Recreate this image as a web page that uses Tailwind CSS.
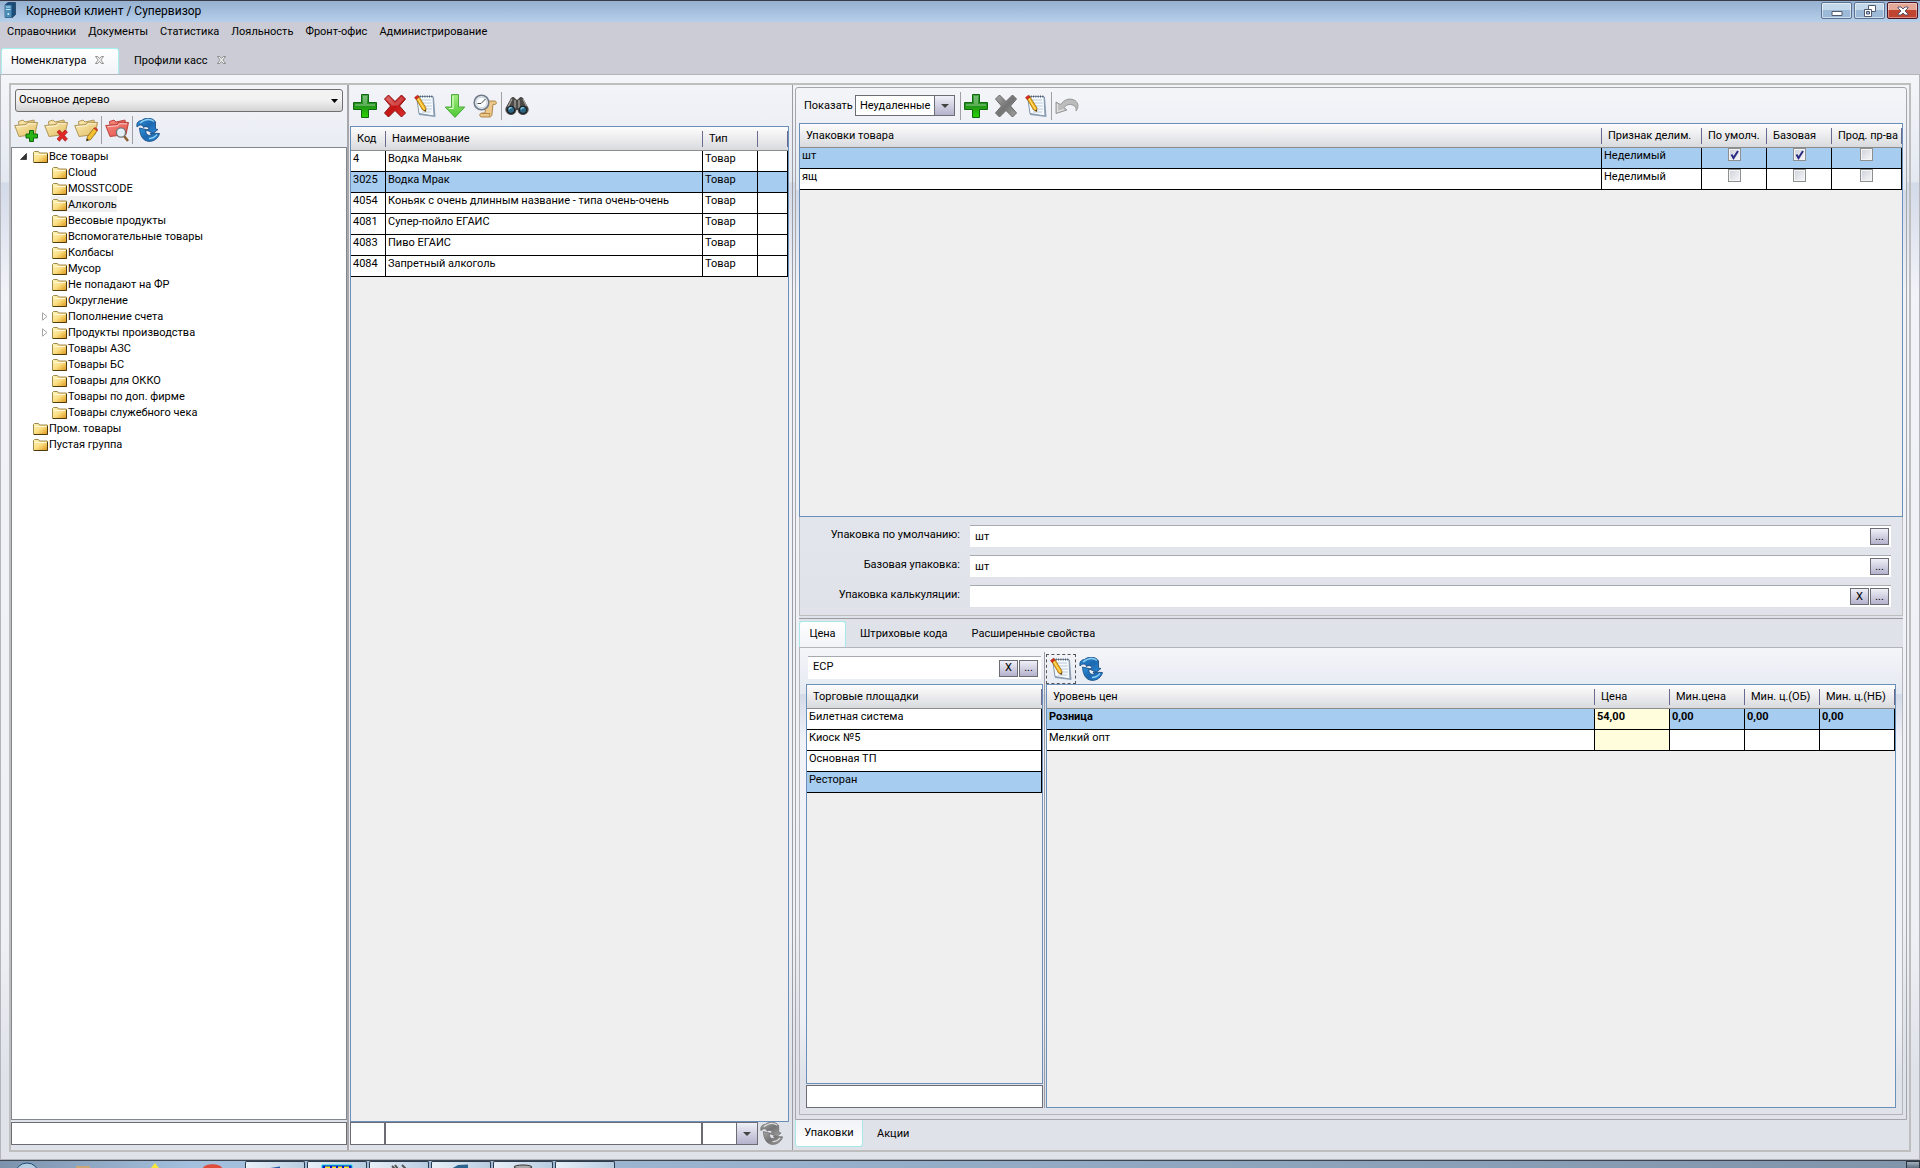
<!DOCTYPE html>
<html lang="ru">
<head>
<meta charset="utf-8">
<title>Корневой клиент / Супервизор</title>
<script src="https://cdn.jsdelivr.net/npm/@tailwindcss/browser@4"></script>
</head>
<body class="flex min-h-screen flex-col bg-[#cbccd5] font-['Roboto',sans-serif] text-[11px] leading-4 text-black">
<svg class="absolute size-0" aria-hidden="true">
  <defs>
    <linearGradient id="gGreen" x1="0" y1="0" x2="0" y2="1"><stop offset="0" stop-color="#4aa84a"/><stop offset=".45" stop-color="#1f8f1a"/><stop offset="1" stop-color="#2bd400"/></linearGradient>
    <linearGradient id="gRed" x1="0" y1="0" x2="1" y2="1"><stop offset="0" stop-color="#d84a4a"/><stop offset=".5" stop-color="#c41414"/><stop offset="1" stop-color="#e03030"/></linearGradient>
    <linearGradient id="gDown" x1="0" y1="0" x2="0" y2="1"><stop offset="0" stop-color="#a4ec80"/><stop offset="1" stop-color="#4cc832"/></linearGradient>
    <linearGradient id="gBlue" x1="0" y1="0" x2="1" y2="1"><stop offset="0" stop-color="#2f95dc"/><stop offset=".5" stop-color="#1c68b0"/><stop offset="1" stop-color="#2c8ad6"/></linearGradient>
    <linearGradient id="gGray" x1="0" y1="0" x2="1" y2="1"><stop offset="0" stop-color="#a8a8a8"/><stop offset=".5" stop-color="#747474"/><stop offset="1" stop-color="#a4a4a4"/></linearGradient>
    <linearGradient id="gFold" x1="0" y1="0" x2="1" y2="1"><stop offset="0" stop-color="#fdf3b8"/><stop offset=".5" stop-color="#fbdf84"/><stop offset="1" stop-color="#dc9412"/></linearGradient>
    <linearGradient id="gOpen" x1="0" y1="0" x2="1" y2="1"><stop offset="0" stop-color="#fbecb4"/><stop offset="1" stop-color="#e2bc62"/></linearGradient>
    <linearGradient id="gOpenR" x1="0" y1="0" x2="1" y2="1"><stop offset="0" stop-color="#f88a80"/><stop offset="1" stop-color="#e05048"/></linearGradient>
  </defs>
  <symbol id="plus" viewBox="0 0 24 24"><path d="M8.500.5h7v8h8v7h-8v8h-7v-8h-8v-7h8z" fill="url(#gGreen)" stroke="#126612"/><path d="M10 2h4v8h8v2H2v-2h8z" fill="#fff" opacity=".28"/></symbol>
  <symbol id="cross" viewBox="0 0 24 24"><path d="M5.500 1 12 7.500 18.500 1 22.500 5 16.500 12l6 7-4 4L12 16.500 5.500 23l-4-4 6-7-6-7z" fill="url(#gRed)" stroke="#8c1010"/><path d="M5.500 2.500 12 9l6.500-6.500L21 5l-6 6.500H9L3 5z" fill="#fff" opacity=".22"/></symbol>
  <symbol id="crossG" viewBox="0 0 24 24"><path d="M5.500 1 12 7.500 18.500 1 22.500 5 16.500 12l6 7-4 4L12 16.500 5.500 23l-4-4 6-7-6-7z" fill="url(#gGray)" stroke="#666"/></symbol>
  <symbol id="edit" viewBox="0 0 24 24"><path d="M4 3h17l1.500 20L6 21z" fill="#8fa3b8"/><path d="M3.500 2.500h16.500L21 22 6 19.500z" fill="#f6fafd" stroke="#7c90a6" stroke-width=".9"/><path d="M7 6h11M7.500 9h11M8 12h11M8 15h11M9 18h9" stroke="#b4c6da" stroke-width=".9"/><path d="M4.500 2.500h15" stroke="#44566c" stroke-width="2" stroke-dasharray="1 1.300"/><path d="m2.500 4 3-2 7.500 12-.300 3.500-3-1.500z" fill="#f7b51c" stroke="#9c6a10" stroke-width=".8"/><path d="m4.500 4 7 11.500" stroke="#ffe88a"/><path d="m1.500 3.500 3-2.300 1.500 2-3 2.300z" fill="#e0281c" stroke="#90201c" stroke-width=".5"/><path d="m11 16.500 1.700 1-.1-2z" fill="#222"/></symbol>
  <symbol id="down" viewBox="0 0 24 24"><path d="M8.500.6h7V13h6.300L12 23.400 2.200 13h6.300z" fill="url(#gDown)" stroke="#4aa83a"/><path d="M10 2v12.500H6" fill="none" stroke="#d8ffc8" stroke-width="1.200"/></symbol>
  <symbol id="history" viewBox="0 0 24 24"><path d="M13 7h8.500c2.500 0 2.500 3.500 0 3.500l-1.500-.3-1 9.800c0 2-1 3-3 3H9c-3 0-3-4 0-4h3z" fill="#ecc98a" stroke="#a87c3c" stroke-width=".9"/><path d="M9 19.500h8c-1 1-1 2 0 3" fill="none" stroke="#a87c3c" stroke-width=".8"/><circle cx="8.500" cy="8.500" r="7.300" fill="#e8eef4" stroke="#6f7a86" stroke-width="1.600"/><circle cx="8.500" cy="8.500" r="5.200" fill="#fbfdff" stroke="#b4c0cc" stroke-width=".6"/><path d="M8 9.500 12.500 5M8 9.500H4.500" stroke="#444" stroke-width="1" fill="none"/></symbol>
  <symbol id="binoc" viewBox="0 0 24 24"><path d="M6 5c0-2 4-2 4 0l1 1h2l1-1c0-2 4-2 4 0l5 9c1 4-2 6.500-5 6.500s-5-2-5-5h-2c0 3-2 5-5 5S0 18 1 14z" fill="#4c4a48" stroke="#2a2826" stroke-width=".7"/><path d="m7 5-4 8M18 5l3.500 7M10 6v8M14 6v8" stroke="#a8a49c" stroke-width="1.300"/><circle cx="6" cy="15.800" r="3.700" fill="#2c6684" stroke="#161616"/><circle cx="18" cy="15.800" r="3.700" fill="#2c6684" stroke="#161616"/><path d="M4 15.500a2 2 0 0 1 3-1.500M16 15.500a2 2 0 0 1 3-1.500" stroke="#8cd0ec" stroke-width="1.300" fill="none"/></symbol>
  <symbol id="undo" viewBox="0 0 24 24"><path d="M1 8v11.500l11-3.500-3-2.500c3-3.500 7-4 10.500-1.500 1.500 1.500 2 3 1.500 5 3-4 2.500-8-1-10.500C15 3.500 9 5.500 5.500 10.500z" fill="#bcbcbc" stroke="#929292" stroke-width=".9"/><path d="M2.500 10v7.500L9 15.500" fill="none" stroke="#e4e4e4" stroke-width="1.200"/></symbol>
  <symbol id="arrows" viewBox="0 0 24 24"><path d="M1 9C0 4.500 3 2.500 5.500 2.500 9-.8 17-.8 19.500 4v7l2.500.5L17.500 15 10 12l3-1c-.5-2.500-4-3-5.500-1.500L6.500 7.500C4 6.500 2.500 7.500 1 9z"/><path d="M3.500 10 10 11.500v3c.5 2.500 3 3.500 5.500 2.500l-1.500-2 9.500.5C22.500 20 18 24 12 23.300c-5-.8-8-5.300-8.500-13.300z"/></symbol>
  <symbol id="refresh" viewBox="0 0 24 24"><use href="#arrows" width="24" height="24" fill="url(#gBlue)" stroke="#12457c" stroke-width=".8"/><path d="M4 5c5-4 10-4.500 14-1.500M13 20.500c3 0 6-1.500 8-4" stroke="#8cd0f4" stroke-width="1.300" fill="none"/></symbol>
  <symbol id="refreshG" viewBox="0 0 24 24"><use href="#arrows" width="24" height="24" fill="url(#gGray)" stroke="#6c6c6c" stroke-width=".8"/><path d="M4 5c5-4 10-4.500 14-1.500M13 20.500c3 0 6-1.500 8-4" stroke="#ddd" stroke-width="1.300" fill="none"/></symbol>
  <symbol id="folder" viewBox="0 0 15 12"><path d="M.5 11.500V1.500l1-1h4l1 1.500h8v9.500z" fill="url(#gFold)" stroke="#a08a50"/><path d="M14.500 3v8.500H1" fill="none" stroke="#4c3a10"/><path d="M1.500 3.500h12" stroke="#fff8d8"/></symbol>
  <symbol id="fopen" viewBox="0 0 24 22"><path d="M6 16 4.500 3.500 9 2l2 2 9-2 1.500 12z" stroke-width=".9"/><path d="M.7 7.500 12 6.500l1.500-2.300 10 .3L21 16.500 5 18.500z" stroke-width=".9"/><path d="M2.500 8.700 13 7.700l1.500-2 7.500.2" fill="none" stroke="#fff" stroke-opacity=".6"/></symbol>
  <symbol id="fadd" viewBox="0 0 24 24"><use href="#fopen" width="24" height="22" fill="url(#gOpen)" stroke="#a88c4c"/><path d="M15.500 12.500h4v3.500h4v4h-4v3.500h-4V20H12v-4h3.500z" fill="#28b414" stroke="#126612"/></symbol>
  <symbol id="fdel" viewBox="0 0 24 24"><use href="#fopen" width="24" height="22" fill="url(#gOpen)" stroke="#a88c4c"/><path d="m13 14 2.500-2 2.700 3 2.800-3 2.500 2-3 3.500 3 3.500-2.500 2.300-2.800-3.300-2.700 3.300L13 21l3-3.500z" fill="#e02828" stroke="#a01414" stroke-width=".6"/></symbol>
  <symbol id="fedit" viewBox="0 0 24 24"><use href="#fopen" width="24" height="22" fill="url(#gOpen)" stroke="#a88c4c"/><path d="m12.500 22.800 1-4.300L20 10l3.500 2.500-6.700 9z" fill="#f2c030" stroke="#8c6818" stroke-width=".8"/><path d="m19.500 10.500 1.500-1.500 3 2.200-1.200 2z" fill="#d03c2c"/><path d="m12.300 23 .6-2.500 1.900 1.500z" fill="#222"/></symbol>
  <symbol id="ffind" viewBox="0 0 24 24"><use href="#fopen" width="24" height="22" fill="url(#gOpenR)" stroke="#b43830"/><path d="m19 18 4 5" stroke="#8c6030" stroke-width="2.500"/><circle cx="16" cy="14.500" r="4.600" fill="#e4f0f8" stroke="#777" stroke-width="1.400"/></symbol>
</svg>

<header>
  <div class="flex h-[22px] items-start border-t border-[#3a3a44] bg-linear-to-b from-[#95b0d0] to-[#b6cfea] pl-1">
    <svg class="mt-px h-4 w-3" viewBox="0 0 12 16" aria-hidden="true"><path d="M1 3 4 .5h7.500v12L8.500 15.500H1z" fill="#1c4c78" stroke="#0e2c4c" stroke-width=".6"/><path d="M1 3h6.500v12.500H1z" fill="#4a8cb8"/><path d="M2 5h4.500M2 7.500h4.500" stroke="#c4e4f4"/><circle cx="4.300" cy="12" r="1" fill="#d8f0fc"/></svg>
    <h1 class="ml-[10px] text-xs leading-5 font-normal">Корневой клиент / Супервизор</h1>
    <div class="ml-auto flex gap-[2px] pt-px pr-[2px]">
      <button aria-label="Свернуть" class="flex h-[17px] w-[31px] items-center justify-center rounded-[2px] border border-[#5c7090] bg-linear-to-b from-[#c4d8ec] from-45% to-[#9cbad8] to-50% shadow-[inset_0_0_0_1px_#ffffff80]"><svg class="h-3 w-3" viewBox="0 0 12 12"><path d="M1 6.500h10v4H1z" fill="#fff" stroke="#50586c"/></svg></button>
      <button aria-label="Развернуть" class="flex h-[17px] w-[31px] items-center justify-center rounded-[2px] border border-[#5c7090] bg-linear-to-b from-[#c4d8ec] from-45% to-[#9cbad8] to-50% shadow-[inset_0_0_0_1px_#ffffff80]"><svg class="h-3 w-3" viewBox="0 0 12 12"><path d="M4.500.5h7v6h-7z" fill="#fff" stroke="#50586c"/><path d="M.5 4.500h7v7h-7z" fill="#fff" stroke="#50586c"/><path d="M2.500 6.500h3v2.500h-3z" fill="#9cbad8" stroke="#50586c"/></svg></button>
      <button aria-label="Закрыть" class="flex h-[17px] w-[31px] items-center justify-center rounded-[2px] border border-[#4c1420] bg-linear-to-b from-[#e4a898] from-45% to-[#c04430] to-50% shadow-[inset_0_0_0_1px_#ffffff60]"><svg class="h-[10px] w-3" viewBox="0 0 12 10"><path d="M1 1h3l2 2 2-2h3v1L8 5l3 3v1H8L6 7 4 9H1V8l3-3-3-3z" fill="#fff" stroke="#504860" stroke-width=".9"/></svg></button>
    </div>
  </div>
  <nav class="flex h-[26px] items-start gap-3 pt-[2px] pl-[7px]">
    <a href="#">Справочники</a><a href="#">Документы</a><a href="#">Статистика</a><a href="#">Лояльность</a><a href="#">Фронт-офис</a><a href="#">Администрирование</a>
  </nav>
  <div class="flex h-[26px] pl-px">
    <button class="flex w-[118px] items-center gap-[9px] rounded-t-[3px] border border-b-0 border-[#a8f0f0] bg-linear-to-b from-white to-[#f2f3f8] pb-px pl-[9px] text-left">Номенклатура
      <svg class="mb-[2px] h-2 w-[9px]" viewBox="0 0 9 8"><path d="M.5.5h2.200l1.800 2 1.800-2h2.200L5.800 4l2.700 3.500H6.300l-1.800-2-1.800 2H.5L3.200 4z" fill="#f4f4f4" stroke="#777" stroke-width=".8"/></svg></button>
    <button class="flex items-center gap-[9px] pl-[15px] text-left">Профили касс
      <svg class="mb-[2px] h-2 w-[9px]" viewBox="0 0 9 8"><path d="M.5.5h2.200l1.800 2 1.800-2h2.200L5.800 4l2.700 3.500H6.300l-1.800-2-1.800 2H.5L3.200 4z" fill="#f4f4f4" stroke="#777" stroke-width=".8"/></svg></button>
  </div>
</header>

<main class="flex flex-1 flex-col border border-[#b4b5ba] bg-[linear-gradient(#f4f5f9,#e4e9f1_9.8%,#d3dae8_10%,#f2f3f9_20%,#eef0f5_80%,#e0e2ea_92%)] px-2 pt-2 pb-[7px]">
  <div class="flex flex-1 border-2 border-[#bebebe]">
    <!-- Дерево групп -->
    <section class="flex w-[336px] shrink-0 flex-col">
      <div class="relative px-1 pt-1"><select aria-label="Дерево" class="h-[23px] w-full appearance-none rounded-[3px] border border-[#707070] bg-linear-to-b from-[#f2f2f2] from-45% to-[#d4d4d4] pb-px pl-[3px]"><option>Основное дерево</option></select>
        <svg class="pointer-events-none absolute top-[14px] right-[9px] h-1 w-[7px]" viewBox="0 0 7 4"><path d="M0 0h7L3.500 4z"/></svg></div>
      <div class="flex h-[35px] items-center pl-[3px]">
        <button aria-label="Добавить группу"><svg class="size-6"><use href="#fadd"/></svg></button>
        <button aria-label="Удалить группу" class="ml-[6px]"><svg class="size-6"><use href="#fdel"/></svg></button>
        <button aria-label="Изменить группу" class="ml-[6px]"><svg class="size-6"><use href="#fedit"/></svg></button>
        <i class="ml-[3px] h-7 w-px bg-[#a0a0a4]"></i>
        <button aria-label="Найти группу" class="ml-[3px]"><svg class="size-6"><use href="#ffind"/></svg></button>
        <i class="ml-[3px] h-7 w-px bg-[#a0a0a4]"></i>
        <button aria-label="Обновить" class="ml-[3px]"><svg class="size-6"><use href="#refresh"/></svg></button>
      </div>
      <ul id="tree" class="flex-1 border border-[#828790] bg-white pl-[7px]"></ul>
      <input aria-label="Поиск группы" class="mt-[2px] mb-[5px] h-[23px] border border-[#6c6c74] bg-white px-1">
    </section>
    <div class="w-[3px] shrink-0 border-l-2 border-[#a8a8ac] bg-[#ececf0]"></div>

    <!-- Товары -->
    <section class="flex w-[442px] shrink-0 flex-col">
      <div class="flex h-[41px] items-center pl-[3px]">
        <button aria-label="Добавить"><svg class="size-6"><use href="#plus"/></svg></button>
        <button aria-label="Удалить" class="ml-[6px]"><svg class="size-6"><use href="#cross"/></svg></button>
        <button aria-label="Изменить" class="ml-[6px]"><svg class="size-6"><use href="#edit"/></svg></button>
        <button aria-label="Переместить" class="ml-[6px]"><svg class="size-6"><use href="#down"/></svg></button>
        <button aria-label="История" class="ml-[6px]"><svg class="size-6"><use href="#history"/></svg></button>
        <i class="ml-[4px] h-7 w-px bg-[#a0a0a4]"></i>
        <button aria-label="Поиск" class="ml-[3px]"><svg class="size-6"><use href="#binoc"/></svg></button>
      </div>
      <div class="mr-[3px] flex-1 border border-[#6a8fb8] bg-[#efefef]">
        <table id="goods" class="w-full table-fixed border-separate border-spacing-0 text-left"></table>
      </div>
      <div class="mb-[5px] flex h-[23px]">
        <input aria-label="Фильтр: код" class="w-[35px] border border-[#6c6c74] bg-white">
        <input aria-label="Фильтр: наименование" class="w-[317px] border border-[#6c6c74] bg-white">
        <select aria-label="Фильтр: тип" class="w-[35px] appearance-none border border-[#6c6c74] bg-white"><option></option></select>
        <button aria-label="Открыть список" class="flex w-[21px] items-center justify-center border border-l-0 border-[#6c6c74] bg-linear-to-b from-[#f0f0f8] to-[#b4b2cc]"><svg class="h-1 w-2" viewBox="0 0 8 4"><path d="M0 0h8L4 4z" fill="#444"/></svg></button>
        <button aria-label="Обновить" class="ml-[2px]"><svg class="size-[23px]"><use href="#refreshG"/></svg></button>
      </div>
    </section>
    <div class="w-[3px] shrink-0 border-l border-[#9c9ca4]"></div>

    <!-- Упаковки и цены -->
    <section class="flex min-w-0 flex-1 flex-col pt-[2px] pr-[2px]">
      <div class="flex flex-1 flex-col rounded-t-[3px] border border-[#a4a6aa] bg-[linear-gradient(#f4f5f9,#e4e9f1_9.8%,#d3dae8_10%,#f2f3f9_20%,#eef0f5_80%,#e0e2ea_92%)] px-[3px] pb-1">
        <div class="flex h-[35px] items-center pl-[5px]">
          <label for="show" class="w-[47px] leading-[18px]">Показать</label>
          <div class="ml-[4px] flex h-[21px]">
            <select id="show" class="w-20 appearance-none border border-[#6c6c74] bg-white pl-1"><option>Неудаленные</option></select>
            <button aria-label="Открыть список" class="flex w-5 items-center justify-center border border-l-0 border-[#6c6c74] bg-linear-to-b from-[#f0f0f8] to-[#b4b2cc]"><svg class="h-1 w-2" viewBox="0 0 8 4"><path d="M0 0h8L4 4z" fill="#444"/></svg></button>
          </div>
          <i class="ml-[5px] h-7 w-px bg-[#a0a0a4]"></i>
          <button aria-label="Добавить упаковку" class="ml-[3px]"><svg class="size-6"><use href="#plus"/></svg></button>
          <button aria-label="Удалить упаковку" class="ml-[6px]"><svg class="size-6"><use href="#crossG"/></svg></button>
          <button aria-label="Изменить упаковку" class="ml-[6px]"><svg class="size-6"><use href="#edit"/></svg></button>
          <i class="ml-[3px] h-7 w-px bg-[#a0a0a4]"></i>
          <button aria-label="Отменить" class="ml-[3px]"><svg class="size-6"><use href="#undo"/></svg></button>
        </div>
        <div class="h-[394px] border border-[#6a8fb8] bg-[#efefef]">
          <table id="packs" class="w-full table-fixed border-separate border-spacing-0 text-left"></table>
        </div>
        <div id="fields" class="flex flex-col gap-2 border border-t-0 border-[#bebebe] bg-linear-to-b from-[#e2e6ec] to-[#e0e2ea] py-2 pr-[11px]"></div>
        <div class="border-b border-[#9c9ca0] bg-[#e0e2ea] pt-[2px]"></div>
        <div class="flex h-[28px] bg-[#e0e2ea] pt-[2px]">
          <button class="w-[47px] rounded-t-[3px] border border-b-0 border-[#a8e8e8] bg-linear-to-b from-white to-[#f2f3f8] pb-px">Цена</button>
          <button class="ml-[14px]">Штриховые кода</button>
          <button class="ml-[24px]">Расширенные свойства</button>
        </div>
        <div class="flex flex-1 border border-[#b4b5ba] bg-[linear-gradient(#f4f5f9,#e4e9f1_9.8%,#d3dae8_10%,#f2f3f9_20%,#eef0f5_80%,#e0e2ea_92%)] px-[6px] pb-[6px]">
          <div class="flex w-[237px] shrink-0 flex-col">
            <div class="mx-[2px] mt-2 mb-[5px] flex h-[23px] items-center gap-px border-t border-[#a8a8b0] bg-white pr-[3px]">
              <input aria-label="Прейскурант" value="ECP" class="min-w-0 flex-1 pb-[2px] pl-[5px]">
              <button class="h-[17px] w-[19px] border border-[#6c6c74] bg-linear-to-b from-[#f0f0f8] to-[#b4b2cc] leading-3">X</button>
              <button class="h-[17px] w-[19px] border border-[#6c6c74] bg-linear-to-b from-[#f0f0f8] to-[#b4b2cc] leading-3">...</button>
            </div>
            <div class="flex-1 border border-[#6a8fb8] bg-[#efefef]">
              <table id="places" class="w-full table-fixed border-separate border-spacing-0 text-left"></table>
            </div>
            <input aria-label="Фильтр площадок" class="mt-px h-[23px] border border-[#6c6c74] bg-white px-1">
          </div>
          <div class="mt-1 mr-px ml-px w-px shrink-0 bg-[#9c9ca4]"></div>
          <div class="flex min-w-0 flex-1 flex-col">
            <div class="flex h-9 items-end">
              <button aria-label="Изменить цену" class="flex h-[30px] w-[30px] items-center justify-center border border-dashed border-[#555]"><svg class="size-6"><use href="#edit"/></svg></button>
              <button aria-label="Обновить цены" class="mb-[3px] ml-[3px]"><svg class="size-6"><use href="#refresh"/></svg></button>
            </div>
            <div class="flex-1 border border-[#6a8fb8] bg-[#efefef]">
              <table id="prices" class="w-full table-fixed border-separate border-spacing-0 text-left"></table>
            </div>
          </div>
        </div>
      </div>
      <div class="mb-[3px] flex h-[27px]">
        <button class="w-[68px] rounded-b-[3px] border border-t-0 border-[#a8e8e8] bg-linear-to-b from-[#f2f3f8] to-white">Упаковки</button>
        <button class="ml-[14px]">Акции</button>
      </div>
    </section>
  </div>
</main>

<footer class="flex h-2 overflow-hidden border-t border-[#3c4450] bg-linear-to-r from-[#7c92ac] via-[#a4c0de] via-10% to-[#8094aa]">
  <svg class="h-[7px] w-[245px]" viewBox="0 0 245 7" aria-hidden="true"><circle cx="27" cy="14" r="12" fill="#b4cce0" stroke="#1c4c74"/><path d="M76 5h14v2H76z" fill="#c8a878"/><path d="m155 2 4 5h-8z" fill="#f8e83c"/><path d="M203 7c2-5 17-5 19 0z" fill="#e04c3c"/></svg>
  <div class="flex gap-[2px]">
    <button aria-label="Документ" class="flex h-2 w-[60px] justify-center rounded-t-[2px] border border-b-0 border-[#2c3c50] bg-linear-to-r from-[#e8f0f8] to-[#b8cce0]"><svg class="h-[7px] w-6" viewBox="0 0 24 7"><path d="M1 7 17 4.500V7z" fill="#2454a4"/></svg></button>
    <button aria-label="Монитор" class="flex h-2 w-[60px] justify-center rounded-t-[2px] border border-b-0 border-[#2c3c50] bg-linear-to-r from-[#e8f0f8] to-[#b8cce0]"><svg class="h-[7px] w-8" viewBox="0 0 32 7"><path d="M1 3h30v4H1z" fill="#0818c8" stroke="#18d8e8"/><path d="M4 5.500h5M11 5.500h4M17 5.500h4M23 5.500h5" stroke="#f8e818" stroke-width="2"/></svg></button>
    <button aria-label="Настройки" class="flex h-2 w-[60px] justify-center rounded-t-[2px] border border-b-0 border-[#2c3c50] bg-linear-to-r from-[#e8f0f8] to-[#b8cce0]"><svg class="h-[7px] w-6" viewBox="0 0 24 7"><path d="M5 4l3 3M8 3l3 4M15 3l4 4" stroke="#555" stroke-width="2"/></svg></button>
    <button aria-label="Супервизор" class="flex h-2 w-[60px] justify-center rounded-t-[2px] border border-b-0 border-[#2c3c50] bg-linear-to-r from-[#e8f0f8] to-[#b8cce0]"><svg class="h-[7px] w-6" viewBox="0 0 24 7"><path d="M2 7 9 3l10-.5V7z" fill="#2c6490"/></svg></button>
    <button aria-label="База данных" class="flex h-2 w-[60px] justify-center rounded-t-[2px] border border-b-0 border-[#2c3c50] bg-linear-to-r from-[#e8f0f8] to-[#b8cce0]"><svg class="h-[7px] w-6" viewBox="0 0 24 7"><ellipse cx="12" cy="5" rx="9" ry="2" fill="#aaa" stroke="#333"/></svg></button>
    <button aria-label="Окно" class="h-2 w-[60px] rounded-t-[2px] border border-b-0 border-[#2c3c50] bg-linear-to-r from-[#e8f0f8] to-[#b8cce0]"></button>
  </div>
  <div class="ml-auto w-[14px] border border-b-0 border-[#2c3440] bg-linear-to-b from-[#a4b0bc] to-[#5c6c80]"></div>
</footer>

<script>
const tree = [
  [0,'Все товары','open'],[1,'Cloud'],[1,'MOSSTCODE'],[1,'Алкоголь','sel'],[1,'Весовые продукты'],[1,'Вспомогательные товары'],
  [1,'Колбасы'],[1,'Мусор'],[1,'Не попадают на ФР'],[1,'Округление'],[1,'Пополнение счета','closed'],[1,'Продукты производства','closed'],
  [1,'Товары АЗС'],[1,'Товары БС'],[1,'Товары для ОККО'],[1,'Товары по доп. фирме'],[1,'Товары служебного чека'],[0,'Пром. товары'],[0,'Пустая группа']];
const marks = {
  open: '<svg class="mr-1 size-[7px]" viewBox="0 0 7 7"><path d="M6.500.5v6h-6z" fill="#333" stroke="#111" stroke-width=".6"/></svg>',
  closed: '<svg class="h-[9px] w-[6px]" viewBox="0 0 6 9"><path d="M.5.8v7.400L5 4.500z" fill="#fff" stroke="#a4a4a4"/></svg>'
};
document.getElementById('tree').innerHTML = tree.map(([lvl, name, st]) =>
  `<li class="flex h-4 items-center ${lvl ? 'pl-[19px]' : ''}"><span class="flex w-[13px] shrink-0 justify-center">${marks[st] || ''}</span>
   <span class="flex h-4 items-start pl-px ${st === 'sel' ? 'bg-[#f0f0f0]' : ''}"><svg class="mt-[3px] h-3 w-[15px] shrink-0"><use href="#folder"/></svg><span class="ml-px leading-[18px] whitespace-nowrap">${name}</span></span></li>`).join('');

// Строит таблицу: ширины колонок, заголовки, строки, индекс выделенной строки
function grid(id, cols, heads, rows, sel, cell) {
  const col = cols.map(w => w ? `<col style="width:${w}px">` : '<col>').join('');
  const th = heads.map(h => `<th class="h-6 border-b border-[#8c8c8c] bg-linear-to-b from-[#fdfdfd] via-[#ececee] via-50% to-[#d8dadd] p-0 font-normal"><div class="h-4 overflow-hidden border-r border-[#6a6a90] pl-[6px] leading-4 whitespace-nowrap">${h || '&nbsp;'}</div></th>`).join('');
  const tr = rows.map((r, i) => `<tr class="${i === sel ? 'bg-[#a6ccf0]' : 'bg-white'}">` + r.map((v, j) => {
    const c = cell && cell(v, i, j);
    return c || `<td class="h-[21px] border-r border-b border-black p-0 pl-[2px] align-top leading-4 whitespace-nowrap">${v}</td>`;
  }).join('') + '</tr>').join('');
  document.getElementById(id).innerHTML = `<colgroup>${col}</colgroup><thead><tr>${th}</tr></thead><tbody>${tr}</tbody>`;
}
grid('goods', [35, 317, 55, 0], ['Код', 'Наименование', 'Тип', ''], [
  ['4','Водка Маньяк','Товар',''],['3025','Водка Мрак','Товар',''],['4054','Коньяк с очень длинным название - типа очень-очень','Товар',''],
  ['4081','Супер-пойло ЕГАИС','Товар',''],['4083','Пиво ЕГАИС','Товар',''],['4084','Запретный алкоголь','Товар','']], 1);
grid('packs', [0, 100, 65, 65, 70], ['Упаковки товара','Признак делим.','По умолч.','Базовая','Прод. пр-ва'],
  [['шт','Неделимый',true,true,false],['ящ','Неделимый',false,false,false]], 0,
  (v, i, j) => typeof v === 'boolean' && `<td class="h-[21px] border-r border-b border-black p-0 align-top"><div class="relative mx-auto size-[13px]"><input type="checkbox" aria-label="Признак ${i + 1}.${j}" ${v ? 'checked' : ''} class="peer block size-[13px] appearance-none border border-[#8e8f8f] bg-linear-to-br from-[#cdd1da] to-[#f8f8fa] shadow-[inset_0_0_0_1px_#f4f4f4]"><svg class="pointer-events-none absolute inset-0 hidden size-[13px] peer-checked:block" viewBox="0 0 13 13"><path d="m3.500 6.500 2 3.500L10 3" fill="none" stroke="#2c2c84" stroke-width="2"/></svg></div></td>`);
grid('places', [0], ['Торговые площадки'], [['Билетная система'],['Киоск №5'],['Основная ТП'],['Ресторан']], 3);
grid('prices', [0, 75, 75, 75, 75], ['Уровень цен','Цена','Мин.цена','Мин. ц.(ОБ)','Мин. ц.(НБ)'],
  [['Розница','54,00','0,00','0,00','0,00'],['Мелкий опт','','','','']], 0,
  (v, i, j) => `<td class="h-[21px] border-r border-b border-black p-0 pl-[2px] align-top leading-4 whitespace-nowrap ${i === 0 ? 'font-bold' : ''} ${j === 1 ? 'bg-[#fffddc]' : ''}">${v}</td>`);

document.getElementById('fields').innerHTML = [['Упаковка по умолчанию:','шт',0],['Базовая упаковка:','шт',0],['Упаковка калькуляции:','',1]].map(([l, v, x], i) =>
  `<div class="flex h-[22px]"><label for="f${i}" class="w-[160px] shrink-0 text-right leading-5">${l}</label>
   <div class="ml-[10px] flex flex-1 items-center gap-px border-t border-[#a8a8b0] bg-white pr-[2px]">
   <input id="f${i}" value="${v}" class="min-w-0 flex-1 pl-[5px]">
   ${x ? '<button class="h-[17px] w-[19px] border border-[#6c6c74] bg-linear-to-b from-[#f0f0f8] to-[#b4b2cc] leading-3">X</button>' : ''}
   <button class="h-[17px] w-[19px] border border-[#6c6c74] bg-linear-to-b from-[#f0f0f8] to-[#b4b2cc] leading-3">...</button></div></div>`).join('');
</script>
</body>
</html>
